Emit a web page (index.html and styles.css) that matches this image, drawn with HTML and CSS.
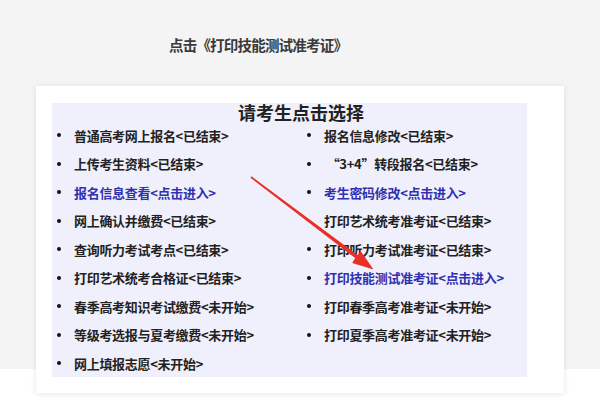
FILE: index.html
```html
<!DOCTYPE html>
<html lang="zh-CN">
<head>
<meta charset="utf-8">
<title>点击《打印技能测试准考证》</title>
<link rel="stylesheet" href="styles.css">
</head>
<body>
<div class="page">
  <h1 class="heading">点击《打印技能测试准考证》</h1>
  <div class="card">
    <div class="panel">
      <h2 class="panel-title">请考生点击选择</h2>
      <div class="cols">
        <ul class="list list-left">
          <li>普通高考网上报名&lt;已结束&gt;</li>
          <li>上传考生资料&lt;已结束&gt;</li>
          <li class="link">报名信息查看&lt;点击进入&gt;</li>
          <li>网上确认并缴费&lt;已结束&gt;</li>
          <li>查询听力考试考点&lt;已结束&gt;</li>
          <li>打印艺术统考合格证&lt;已结束&gt;</li>
          <li>春季高考知识考试缴费&lt;未开始&gt;</li>
          <li>等级考选报与夏考缴费&lt;未开始&gt;</li>
          <li>网上填报志愿&lt;未开始&gt;</li>
        </ul>
        <ul class="list list-right">
          <li>报名信息修改&lt;已结束&gt;</li>
          <li>&nbsp;“3+4”转段报名&lt;已结束&gt;</li>
          <li class="link">考生密码修改&lt;点击进入&gt;</li>
          <li class="nobullet">打印艺术统考准考证&lt;已结束&gt;</li>
          <li>打印听力考试准考证&lt;已结束&gt;</li>
          <li class="link">打印技能测试准考证&lt;点击进入&gt;</li>
          <li>打印春季高考准考证&lt;未开始&gt;</li>
          <li>打印夏季高考准考证&lt;未开始&gt;</li>
        </ul>
      </div>
    </div>
  </div>
  <svg class="arrow" width="600" height="418" viewBox="0 0 600 418" aria-hidden="true">
    <polygon fill="#ea2f26" points="251.5,176.3 357.6,254.9 360.6,250.9 373.5,269.5 352.2,262.9 355.2,258.1 250.5,177.7"/>
  </svg>
</div>
</body>
</html>
```
FILE: styles.css
```css
html, body {
  margin: 0;
  padding: 0;
}
body {
  width: 600px;
  height: 418px;
  overflow: hidden;
  background: linear-gradient(#f4f4f4 0, #f4f4f4 369px, #ffffff 369px);
  font-family: "Noto Sans CJK SC", "Noto Sans", sans-serif;
}
.page {
  position: relative;
  width: 600px;
  height: 418px;
  padding-top: 35px;
  box-sizing: border-box;
}
.heading {
  margin: 0;
  padding-left: 169px;
  font-size: 14.5px;
  line-height: 20px;
  font-weight: 700;
  color: #3a3a3a;
  letter-spacing: -0.8px;
}
.card {
  margin: 31px 0 0 36px;
  width: 528px;
  height: 307px;
  box-sizing: border-box;
  background: #fff;
  box-shadow: 0 1px 6px rgba(0, 0, 0, 0.10);
  padding: 17px 37px 16px 16px;
}
.panel {
  background: #f0f0fc;
  height: 274px;
}
.panel-title {
  margin: 0;
  padding-left: 23px;
  text-align: center;
  font-size: 18px;
  line-height: 18px;
  font-weight: bold;
  color: #222;
}
.cols {
  display: flex;
}
.list {
  list-style: none;
  margin: 0;
  padding: 0;
}
.list-left {
  width: 250px;
}
.list-right {
  flex: 1;
}
.list li {
  display: flex;
  align-items: center;
  height: 28.5px;
  font-size: 13px;
  font-weight: bold;
  color: #222;
  white-space: nowrap;
  letter-spacing: -0.3px;
}
.list li::before {
  content: "";
  width: 4px;
  height: 4px;
  border-radius: 50%;
  background: #111;
  margin: 0 13px 0 5px;
  flex: none;
}
.list li.nobullet::before {
  background: transparent;
}
.list li.link {
  color: #3030b0;
}
.arrow {
  position: absolute;
  left: 0;
  top: 0;
  pointer-events: none;
}
```
